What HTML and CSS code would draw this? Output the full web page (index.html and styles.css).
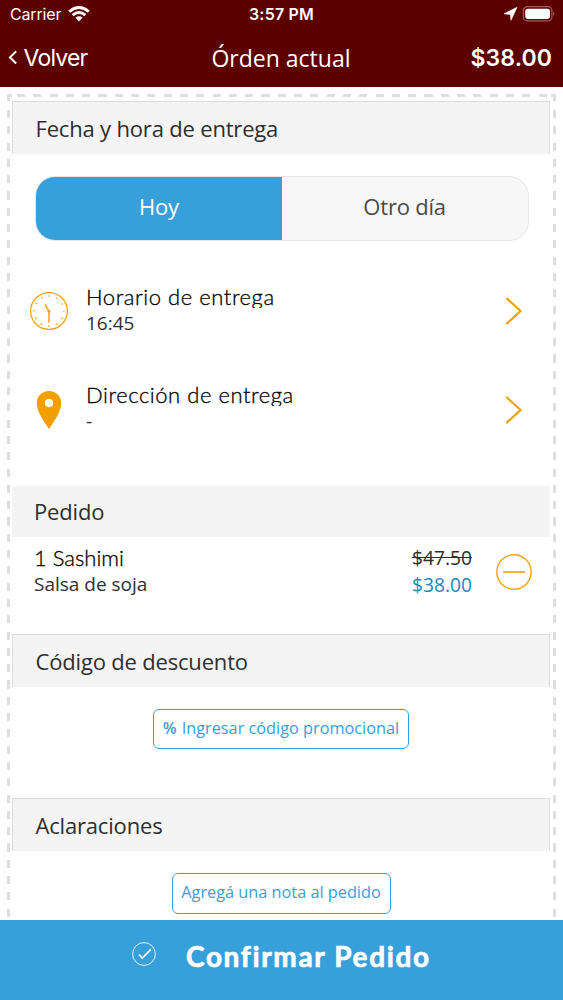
FILE: index.html
```html
<!DOCTYPE html>
<html lang="es">
<head>
<meta charset="utf-8">
<title>Órden actual</title>
<link rel="stylesheet" href="styles.css">
</head>
<body>
<div class="app">
  <header class="top">
    <div class="status">
      <div class="carrier"><span class="t-carrier">Carrier</span>
        <svg width="22" height="16" viewBox="0 0 22 16"><g fill="none" stroke="#fff" stroke-width="2.8"><path d="M1.2 5.6Q11 -2.5 20.800 5.600"/><path d="M4.600 9.100Q11 4 17.400 9.100"/></g><path d="M7.400 11.600Q11 8.800 14.600 11.600L11 15.400Z" fill="#fff"/></svg>
      </div>
      <span class="clock">3:57 PM</span>
      <div class="power">
        <svg width="54" height="18" viewBox="0 0 54 18"><path d="M1 8.800L14 2.300L8 15.300L7.400 9.500Z" fill="#fff" stroke="#fff" stroke-width=".6" stroke-linejoin="round"/><rect x="20.300" y="1.700" width="28.600" height="14.200" rx="4" fill="none" stroke="#9a6060" stroke-width="1.200"/><rect x="22.200" y="3.700" width="24.800" height="10.200" rx="2.400" fill="#fff"/><path d="M50.200 6.600Q52.400 8.800 50.200 11Z" fill="#9a6060"/></svg>
      </div>
    </div>
    <nav class="nav">
      <a class="back"><svg width="10" height="15" viewBox="0 0 10 15"><path d="M8.200 1.300L2 7.400L8.200 13.500" fill="none" stroke="#fff" stroke-width="2"/></svg><span class="t-back">Volver</span></a>
      <h1 class="title">Órden actual</h1>
      <span class="total">$38.00</span>
    </nav>
  </header>

  <main class="sheet">
    <div class="frame">
      <h2 class="head boxed"><span>Fecha y hora de entrega</span></h2>
      <div class="toggle"><span class="seg on"><span>Hoy</span></span><span class="seg"><span>Otro día</span></span></div>
      <div class="row">
        <div class="ico"><svg width="40" height="40" viewBox="0 0 40 40"><circle cx="20" cy="20" r="18.400" fill="none" stroke="#f2a20c" stroke-width="1.300"/><circle cx="20" cy="20" r="15" fill="none" stroke="#f2a20c" stroke-width="1.500" stroke-dasharray="1.400 6.454" stroke-dashoffset=".7"/><path d="M16 13.300L20 20.300V31.500" fill="none" stroke="#f2a20c" stroke-width="1.500"/><circle cx="20" cy="20.300" r="1.400" fill="#f2a20c"/></svg></div>
        <div class="info"><span class="name hor">Horario de entrega</span><span class="val">16:45</span></div>
        <svg class="chev" width="18" height="30" viewBox="0 0 18 30"><path d="M2 2.600L15.600 15L2 27.400" fill="none" stroke="#f2a20c" stroke-width="2.200" stroke-linecap="round"/></svg>
      </div>
      <div class="row second">
        <div class="ico"><svg width="40" height="40" viewBox="0 0 40 40"><path fill-rule="evenodd" d="M20 1C13 1 7.700 6.300 7.700 13C7.700 21 15 32 20 39C25 32 32.300 21 32.300 13C32.300 6.300 27 1 20 1ZM20 9A4.100 4.100 0 1 1 20 17.200A4.100 4.100 0 1 1 20 9Z" fill="#f2a000"/></svg></div>
        <div class="info"><span class="name hor">Dirección de entrega</span><span class="val">-</span></div>
        <svg class="chev" width="18" height="30" viewBox="0 0 18 30"><path d="M2 2.600L15.600 15L2 27.400" fill="none" stroke="#f2a20c" stroke-width="2.200" stroke-linecap="round"/></svg>
      </div>
      <h2 class="head plain"><span>Pedido</span></h2>
      <div class="order">
        <div class="item"><span class="name sas">1 Sashimi</span><span class="val">Salsa de soja</span></div>
        <div class="prices"><span class="old">$47.50</span><span class="new">$38.00</span></div>
        <svg class="minus" width="36" height="36" viewBox="0 0 36 36"><circle cx="18" cy="18" r="17.200" fill="none" stroke="#f2a20c" stroke-width="1.400"/><path d="M7.200 18H29" stroke="#f2a20c" stroke-width="1.700"/></svg>
      </div>
      <h2 class="head boxed"><span>Código de descuento</span></h2>
      <div class="act"><button class="btn promo"><b>%</b><span>Ingresar código promocional</span></button></div>
      <h2 class="head boxed"><span>Aclaraciones</span></h2>
      <div class="act"><button class="btn note"><span>Agregá una nota al pedido</span></button></div>
    </div>
  </main>

  <footer class="confirm">
    <svg width="24" height="24" viewBox="0 0 24 24"><circle cx="12" cy="12" r="11.400" fill="none" stroke="#fff" stroke-opacity=".85" stroke-width="1"/><path d="M7 12.600L10.300 16L18.800 7.400" fill="none" stroke="#fff" stroke-width="1.600"/></svg>
    <span class="t-conf">Confirmar Pedido</span>
  </footer>
</div>
</body>
</html>
```
FILE: styles.css
```css
* { box-sizing: border-box; }
body { margin: 0; background: #fff; font-family: "Open Sans", sans-serif; color: #2e2e2e; }
svg { display: block; flex: none; }
span { white-space: nowrap; }
.app { width: 563px; height: 1000px; display: flex; flex-direction: column; overflow: hidden; }

.top { height: 87px; flex: none; background: #5c0000; color: #fff; }
.status { height: 29px; padding: 0 6px 0 10px; display: grid; grid-template-columns: 1fr auto 1fr; align-items: center; font-family: Inter, sans-serif; font-size: 16px; line-height: 29px; }
.t-carrier { letter-spacing: -.15px; }
.carrier { display: flex; align-items: center; gap: 7px; }
.carrier svg { margin-top: -2px; }
.clock { font-weight: 600; letter-spacing: .2px; position: relative; left: -2px; }
.power { display: flex; justify-content: flex-end; }
.power svg { margin-top: -1px; }
.nav { height: 58px; padding: 0 11px 2px 8px; display: grid; grid-template-columns: 1fr auto 1fr; align-items: center; }
.back { display: flex; align-items: center; gap: 5.500px; font: 23px/56px Inter, sans-serif; letter-spacing: -.8px; }
.back svg { margin-top: -1px; }
.title { margin: 0; font-size: 23px; font-weight: 400; line-height: 56px; padding: 1px 0 0 2px; }
.total { text-align: right; font: 600 23px/56px Inter, sans-serif; letter-spacing: .1px; }

.sheet { height: 832.5px; flex: none; padding: 7px 7px 0; overflow: hidden; }
/* Three dashed sides; the bottom edge is outside the visible area */
.frame {
  height: 850px; padding: 6.500px 6px 0 5px;
  background:
    linear-gradient(#dedede, #dedede) 0 0 / 5px 3px no-repeat,
    linear-gradient(#dedede, #dedede) 100% 0 / 5px 3px no-repeat,
    linear-gradient(#dedede, #dedede) 0 0 / 3px 7px no-repeat,
    linear-gradient(#dedede, #dedede) 100% 0 / 3px 7px no-repeat,
    repeating-linear-gradient(90deg, #dedede 0 8.1px, transparent 8.1px 16.3px) 9.700px 0 / 531px 3px no-repeat,
    repeating-linear-gradient(#dedede 0 8.1px, transparent 8.1px 16.3px) 0 15.500px / 3px 840px no-repeat,
    repeating-linear-gradient(#dedede 0 8.1px, transparent 8.1px 16.3px) 100% 15.500px / 3px 840px no-repeat;
}
.head { margin: 0; display: flex; align-items: center; background: #f4f4f4; font-size: 22px; letter-spacing: -.18px; font-weight: 400; }
.boxed { height: 53px; padding: 0 22px 0 22.500px; border: solid #dcdcdc; border-width: 1px 1px 0; }
.plain { height: 51px; padding: 0 22px; }

.toggle { margin: 22.500px 22px 20px 23px; width: 493.500px; height: 65px; display: flex; border: 1px solid #e6e6e6; border-radius: 20px; overflow: hidden; background: #f7f7f7; }
.seg { flex: 1; display: flex; align-items: center; justify-content: center; padding-bottom: 5px; font-size: 22px; letter-spacing: -.2px; color: #4a4a4a; }
.on { background: #37a0db; color: #fff; }

.row { height: 100px; padding: 0 27px 0 17px; display: flex; align-items: center; }
.second { height: 98px; margin-bottom: 26.500px; }
.ico { width: 57px; }
.info, .item { flex: 1; display: flex; flex-direction: column; }
.name { line-height: 23px; color: #000; font-family: Lato, sans-serif; font-weight: 300; font-size: 22px; letter-spacing: .55px; -webkit-text-stroke: .3px #000; }
/* Row titles are cropped just under the baseline */
.hor { height: 23px; overflow: hidden; }
.second .name { height: 22px; line-height: 21px; margin-bottom: 1px; }
.second .val { margin-top: -1px; }
.sas { letter-spacing: 0; }
.val { font-size: 19px; line-height: 30px; }

.order { height: 97px; padding: 0 18px 0 22px; display: flex; align-items: flex-start; }
.item { padding-top: 9px; }
.prices { display: flex; flex-direction: column; align-items: flex-end; font-size: 19.200px; line-height: 27px; padding-top: 7.500px; margin-right: 24px; }
.old { text-decoration: line-through; }
.new { color: #2188bb; }
.minus { margin-top: 17px; }

.act { height: 111.500px; padding-top: 22px; display: flex; justify-content: center; align-items: flex-start; }
.btn { height: 40.500px; padding: 0 0 2px; display: flex; align-items: center; justify-content: center; gap: 5px; font: 16.300px "Open Sans", sans-serif; color: #37a0db; background: #fff; border: 1.500px solid #37a0db; border-radius: 6px; }
.btn b { font-weight: 600; font-size: 16px; }
.promo { width: 256px; }
.note { width: 219px; }

.confirm { flex: 1; background: #37a0db; color: #fff; padding: 22px 0 0 132px; display: flex; align-items: flex-start; gap: 30px; font: 700 28px/28px Lato, sans-serif; letter-spacing: 1.650px; }
.t-conf { -webkit-text-stroke: .7px #fff; }
```
